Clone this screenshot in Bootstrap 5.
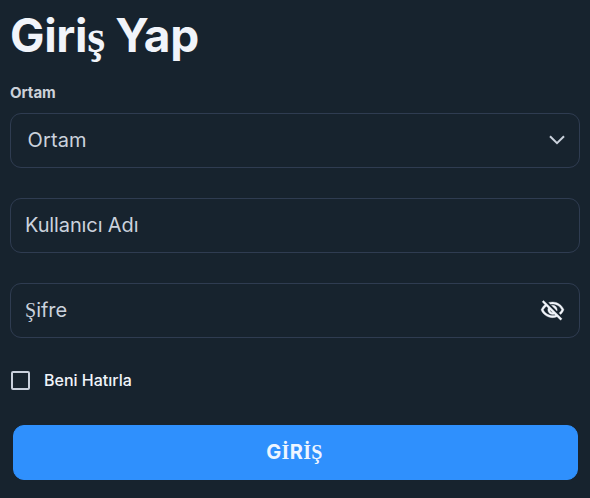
<!DOCTYPE html>
<html lang="tr">
<head>
<meta charset="utf-8">
<meta name="viewport" content="width=device-width, initial-scale=1">
<title>Giriş Yap</title>
<link href="https://cdn.jsdelivr.net/npm/bootstrap@5.3.0/dist/css/bootstrap.min.css" rel="stylesheet">
<style>
body{background:#17232e;color:#f1f4fa;font-family:Inter,"Liberation Sans",sans-serif;height:498px;overflow:hidden}
.alt{font-family:"Liberation Serif",serif;line-height:1}
.login{padding:0 10px}
.title{font-size:46px;font-weight:700;line-height:56px;padding-top:7px;letter-spacing:-.35px}
.field-label{font-size:15px;font-weight:700;line-height:20px;color:#ccd1d9;margin-top:20px;margin-bottom:10px;letter-spacing:-.05px}
.field{height:55px;border:1px solid #2f3c51;border-radius:11px;color:#cbd2dd;font-size:20px;line-height:30px;margin-bottom:30px;padding:0 14px 2px}
.field.env{padding-left:16.5px;padding-right:14.5px;letter-spacing:.15px}
.entry{letter-spacing:-.12px}
.tick{width:19px;height:19px;margin:0 0 0 1px;border:2px solid #c9d0dc;border-radius:2px!important;background-color:transparent}
.remember{height:24px;margin-top:30px;font-size:16px;font-weight:500;gap:14px}
.remember span{line-height:22px;padding-bottom:1px}
.submit{--bs-btn-bg:#2f90fd;--bs-btn-color:#eef5ff;--bs-btn-border-color:#2f90fd;height:55px;border-radius:11px;font-size:20px;font-weight:700;line-height:30px;padding:0 2px 2px 0;letter-spacing:.35px}
.submit-wrap{margin:33px 2px 0 3px}
</style>
</head>
<body>
<main>
<form class="login d-flex flex-column">
<h1 class="title mb-0">Giri<span class="alt">ş</span> Yap</h1>
<div class="field-label">Ortam</div>
<div class="field env d-flex align-items-center justify-content-between" role="combobox">
<span>Ortam</span>
<svg width="16" height="10" viewBox="0 0 16 10" fill="none" stroke="#cbd2dd" stroke-width="2"><path d="M1 1.2l7 7 7-7"/></svg>
</div>
<div class="field d-flex align-items-center" role="textbox"><span class="entry">Kullanıcı Adı</span></div>
<div class="field d-flex align-items-center justify-content-between mb-0" role="textbox">
<span><span class="alt">Ş</span>ifre</span>
<svg width="25" height="25" viewBox="0 0 24 24" fill="#f1f4fa" stroke="#f1f4fa" stroke-width=".3"><path d="M12 6c3.79 0 7.17 2.13 8.82 5.5-.59 1.22-1.42 2.27-2.41 3.12l1.41 1.41c1.39-1.23 2.49-2.77 3.18-4.53C21.27 7.11 17 4 12 4c-1.27 0-2.49.2-3.64.57l1.65 1.65C10.66 6.09 11.32 6 12 6zm-1.07 1.14L13 9.21c.57.25 1.03.71 1.28 1.28l2.07 2.07c.08-.34.14-.7.14-1.07C16.5 9.01 14.48 7 12 7c-.37 0-.72.05-1.07.14zM2.01 3.87l2.68 2.68C3.06 7.83 1.77 9.53 1 11.5 2.73 15.89 7 19 12 19c1.52 0 2.98-.29 4.32-.82l3.42 3.42 1.41-1.41L3.42 2.45 2.01 3.87zm7.5 7.5l2.61 2.61c-.04.01-.08.02-.12.02-1.38 0-2.5-1.12-2.5-2.5 0-.05.01-.08.01-.13zm-3.4-3.4l1.75 1.75c-.23.55-.36 1.15-.36 1.78 0 2.48 2.02 4.5 4.5 4.5.63 0 1.23-.13 1.77-.36l.98.98c-.88.24-1.8.38-2.75.38-3.79 0-7.17-2.13-8.82-5.5.7-1.43 1.72-2.61 2.93-3.53z" transform="translate(0 .8)"/></svg>
</div>
<label class="remember d-flex align-items-center"><input class="form-check-input tick" type="checkbox"><span>Beni Hatırla</span></label>
<div class="submit-wrap"><button type="button" class="btn submit w-100">G<span class="alt">İ</span>R<span class="alt">İŞ</span></button></div>
</form>
</main>
<script src="https://cdn.jsdelivr.net/npm/bootstrap@5.3.0/dist/js/bootstrap.bundle.min.js"></script>
</body>
</html>
